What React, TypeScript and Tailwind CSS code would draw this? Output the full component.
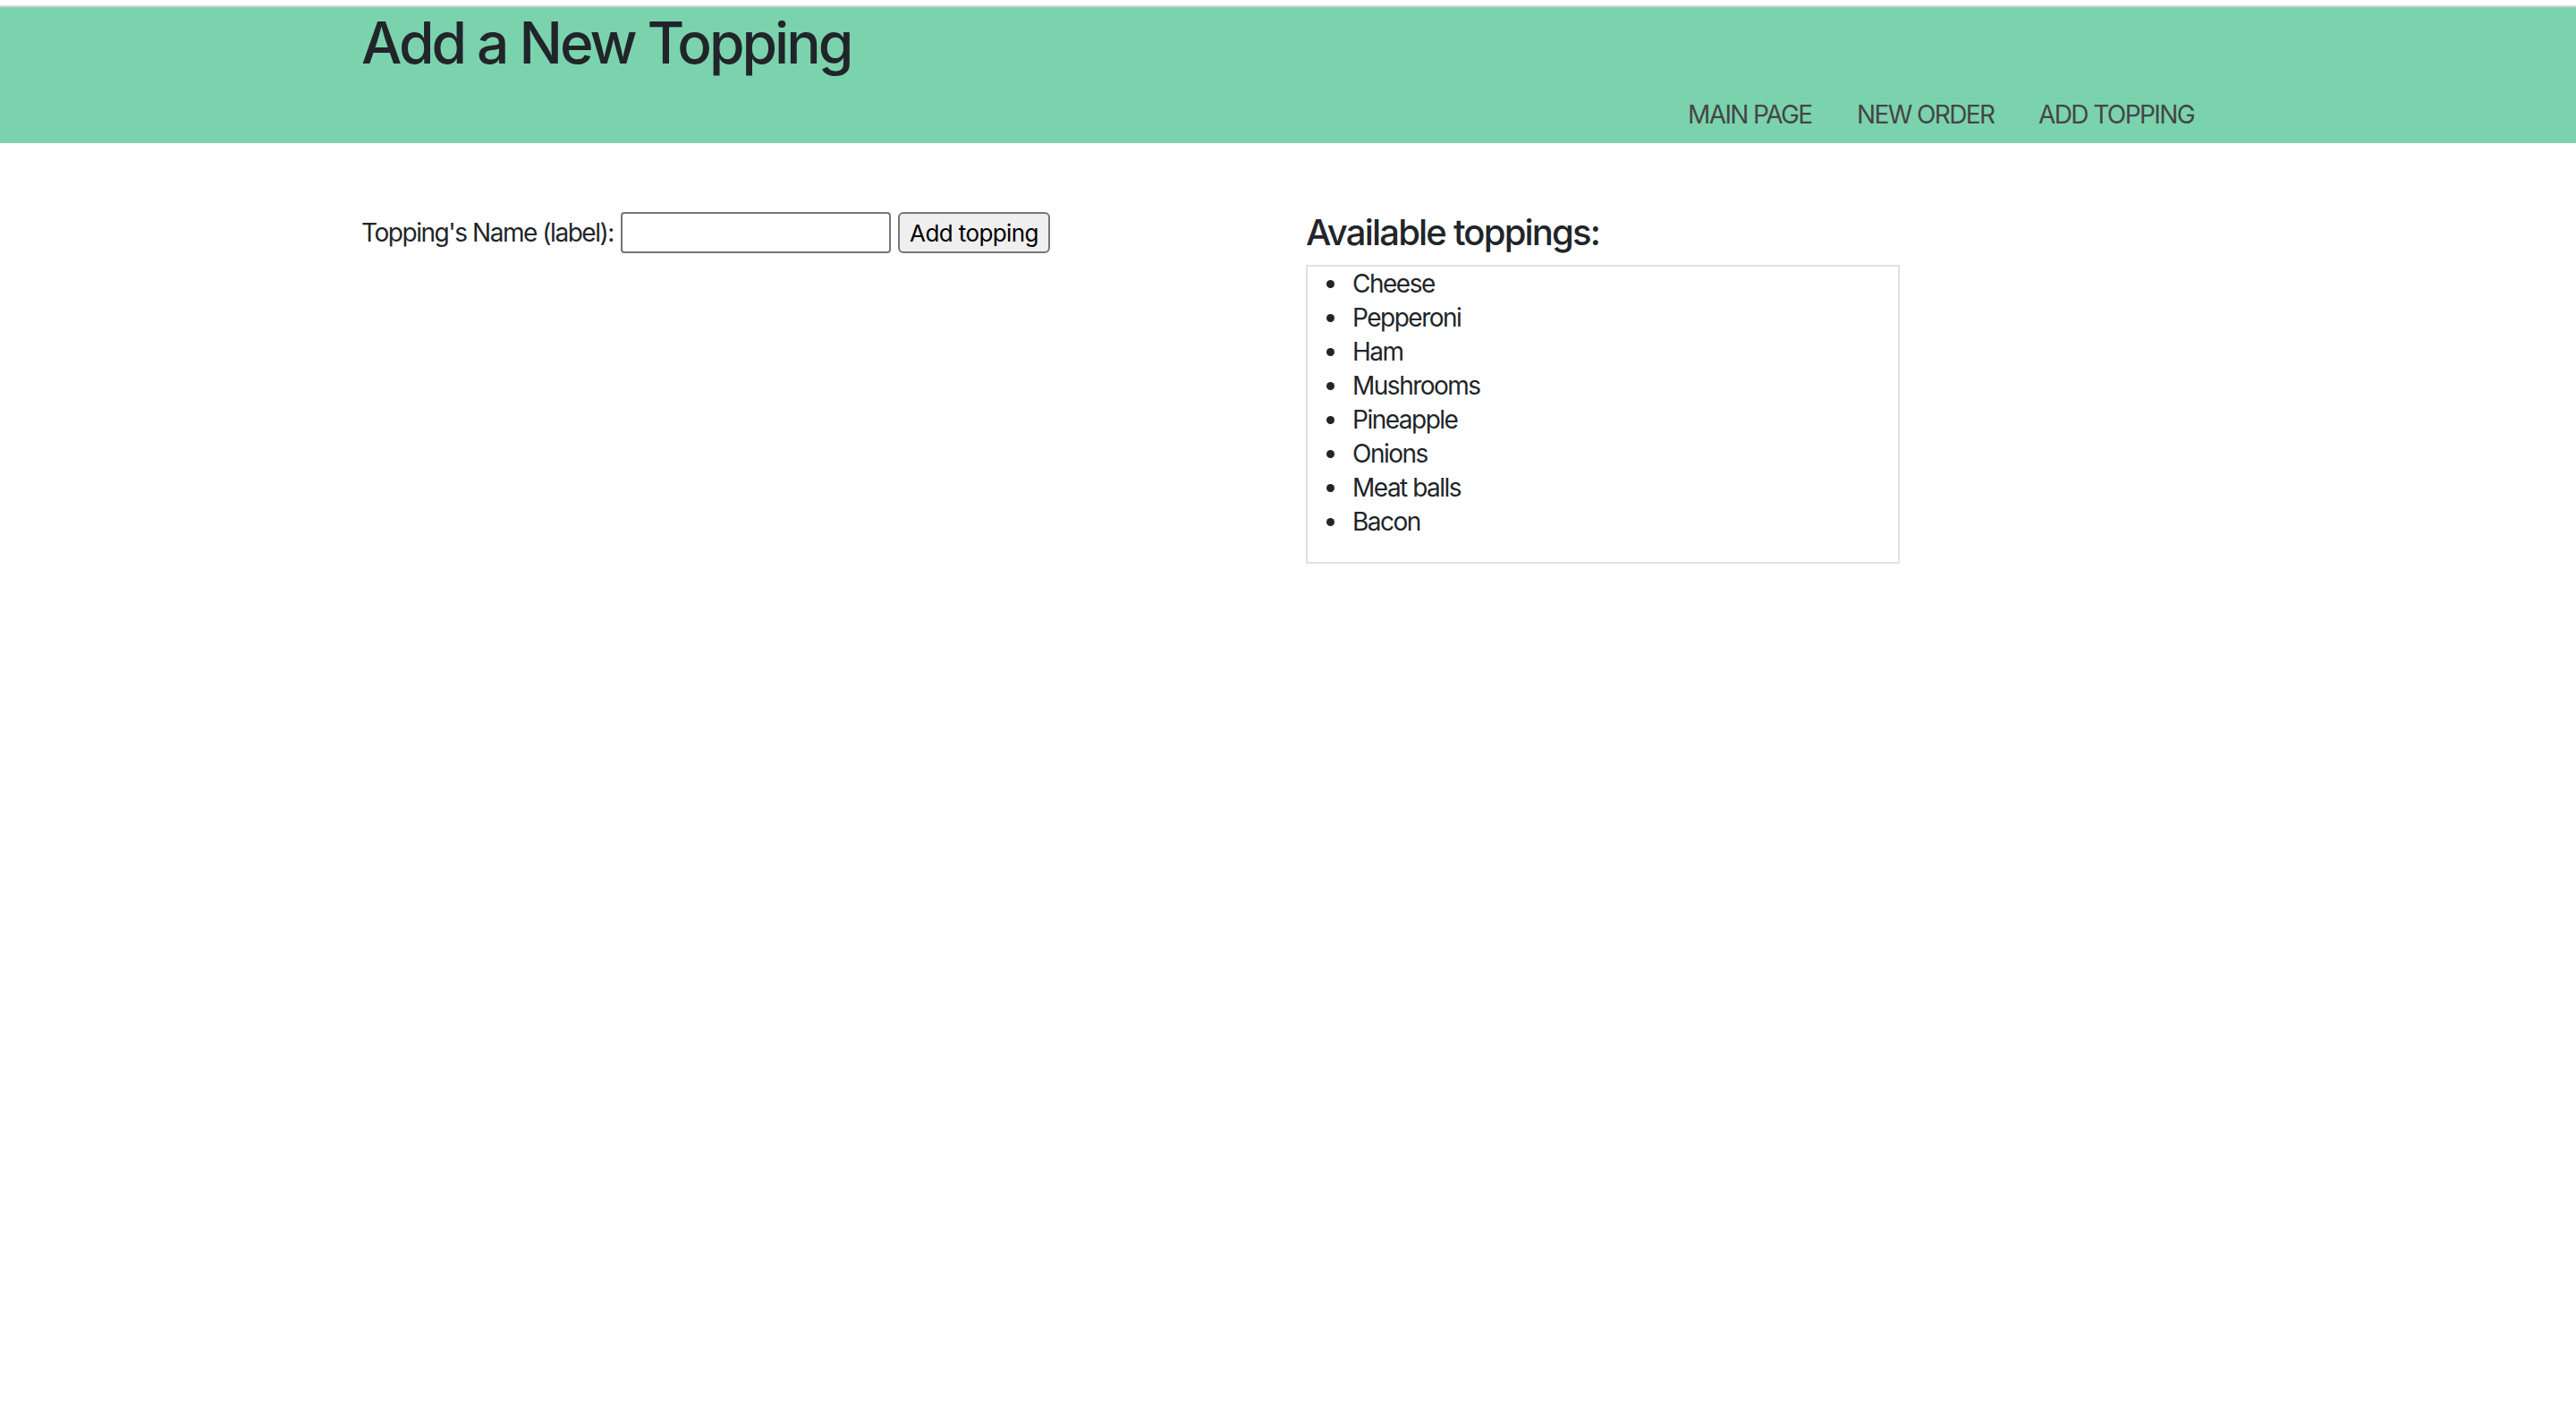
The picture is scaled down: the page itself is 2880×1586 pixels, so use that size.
import React from "react";

const toppings = ["Cheese", "Pepperoni", "Ham", "Mushrooms", "Pineapple", "Onions", "Meat balls", "Bacon"];

export default function App() {
  return (
    <div className="min-h-[1586px] w-full bg-white text-[#212529]" style={{ fontFamily: "Inter, 'Noto Sans', sans-serif" }}>
      <div className="h-[6px] bg-white" />
      <div className="h-[2px] bg-[#d6d6d6]" />
      <header className="bg-[#7bd3ae] h-[152px]">
        <div className="mx-auto w-[2072px] pt-[8px] flex flex-col">
          <h1 className="text-[64px] leading-[64px] font-medium text-[#212529] tracking-[-3px]">Add a New Topping</h1>
          <nav className="mt-[34px] flex justify-end pr-[25px] text-[28px] leading-[28px] text-[#454545] tracking-[-1.6px]">
            <a className="w-[189px]">MAIN PAGE</a>
            <a className="w-[203px]">NEW ORDER</a>
            <a className="w-[172px] whitespace-nowrap">ADD TOPPING</a>
          </nav>
        </div>
      </header>
      <main className="mx-auto w-[2072px] pt-[77px] grid grid-cols-2">
        <div className="flex items-center h-[46px] self-start">
          <label className="text-[28px] leading-[34px] text-[#212529] tracking-[-1.45px]">Topping's Name (label):</label>
          <input className="ml-[8px] w-[302px] h-[46px] border-2 border-[#767676] rounded-[4px] bg-white px-2 text-[26px]" />
          <button className="ml-[8px] w-[170px] h-[46px] border-2 border-[#767676] rounded-[6px] bg-[#efefef] text-[26px] text-black tracking-[-0.6px]">Add topping</button>
        </div>
        <div className="pl-[20px] -mt-[1px]">
          <h4 className="text-[40px] leading-[48px] font-medium text-[#212529] tracking-[-1.8px]">Available toppings:</h4>
          <div className="mt-[12px] w-[664px] border-2 border-[#dee2e6]">
            <ul className="list-disc pl-[46px] mb-[26px] text-[28px] leading-[38px] text-[#212529] tracking-[-1.5px]">
              {toppings.map((t) => (
                <li key={t} className="pl-[4px]">{t}</li>
              ))}
            </ul>
          </div>
        </div>
      </main>
    </div>
  );
}
